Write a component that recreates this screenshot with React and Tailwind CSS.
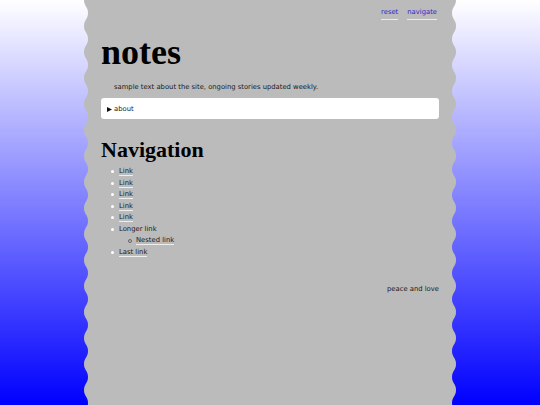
import React from "react";

function Wave({ side }) {
  const id = `wave-${side}`;
  const d =
    side === "left"
      ? "M2 0 C2 6.5 6 6.5 6 13 C6 19.5 2 19.5 2 26 L6 26 L6 0 Z"
      : "M4 0 C4 6.5 0 6.5 0 13 C0 19.5 4 19.5 4 26 L0 26 L0 0 Z";
  return (
    <svg
      className={
        side === "left"
          ? "absolute top-0 left-[-6px] h-full w-[6px]"
          : "absolute top-0 right-[-6px] h-full w-[6px]"
      }
      aria-hidden="true"
    >
      <defs>
        <pattern id={id} width="6" height="26" patternUnits="userSpaceOnUse">
          <path d={d} fill="#bbbbbb" />
        </pattern>
      </defs>
      <rect width="100%" height="100%" fill={`url(#${id})`} />
    </svg>
  );
}

const links = ["Link", "Link", "Link", "Link", "Link"];

export default function App() {
  const sans = { fontFamily: '"DejaVu Sans", Verdana, sans-serif' };
  const serif = { fontFamily: '"Liberation Serif", "Times New Roman", serif' };
  return (
    <div className="min-h-[405px] w-full bg-[linear-gradient(to_bottom,#ffffff,#0000ff)] flex justify-center" style={sans}>
      <div className="relative w-[364px] min-h-[405px] bg-[#bbbbbb] px-[13px] text-[6.8px] text-[#1a1a1a]">
        <Wave side="left" />
        <Wave side="right" />
        <nav className="flex justify-end gap-[9px] pr-[2px] pt-[7px] h-[20px] leading-[10px]">
          <a className="text-[#2a2acc] border-b border-[#e8e8f8]">reset</a>
          <a className="text-[#2a2acc] border-b border-[#e8e8f8]">navigate</a>
        </nav>
        <h1 className="text-[36px] font-bold leading-[40px] mt-[12px] text-black" style={serif}>
          notes
        </h1>
        <p className="mt-[10px] pl-[13px] leading-[10px]">
          sample text about the site, ongoing stories updated weekly.
        </p>
        <div className="mt-[6px] h-[21px] bg-white rounded-[3px] flex items-center pl-[6px] pt-[1px] gap-[2px] leading-[10px]">
          <svg width="5" height="5" viewBox="0 0 5 5" aria-hidden="true">
            <path d="M0 0 L5 2.5 L0 5 Z" fill="#111" />
          </svg>
          <span>about</span>
        </div>
        <h2 className="text-[22px] font-bold leading-[26px] mt-[18px] text-black" style={serif}>
          Navigation
        </h2>
        <ul className="mt-[3px] pl-[10px]">
          {links.map((l, i) => (
            <li key={i} className="flex items-center h-[11.5px] gap-[5px]">
              <span className="w-[3px] h-[3px] rounded-full bg-white" />
              <a className="leading-[8px] border-b border-[#eeeeee]">{l}</a>
            </li>
          ))}
          <li className="flex items-center h-[11.5px] gap-[5px]">
            <span className="w-[3px] h-[3px] rounded-full bg-white" />
            <span className="leading-[8px] border-b border-transparent">Longer link</span>
          </li>
          <li className="flex items-center h-[11.5px] gap-[4px] pl-[17px]">
            <span className="w-[4px] h-[4px] rounded-full border border-[#666]" />
            <a className="leading-[8px] border-b border-[#eeeeee]">Nested link</a>
          </li>
          <li className="flex items-center h-[11.5px] gap-[5px]">
            <span className="w-[3px] h-[3px] rounded-full bg-white" />
            <a className="leading-[8px] border-b border-[#eeeeee]">Last link</a>
          </li>
        </ul>
        <footer className="mt-[26px] text-right leading-[10px]">peace and love</footer>
      </div>
    </div>
  );
}
